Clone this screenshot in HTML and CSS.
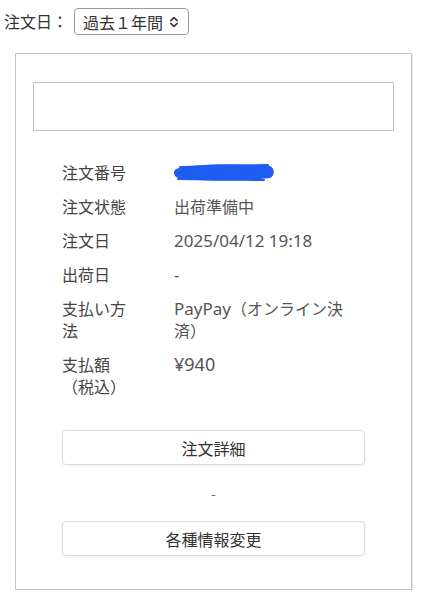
FILE: index.html
```html
<!DOCTYPE html>
<html lang="ja">
<head>
<meta charset="utf-8">
<link rel="stylesheet" href="styles.css">
</head>
<body>
<div class="filter">
  <span class="filter-label">注文日：</span>
  <div class="select">
    <span class="select-text">過去１年間</span>
    <svg class="chev" width="10" height="12" viewBox="0 0 10 12"><path d="M1.8 4.6 L5 1.6 L8.2 4.6 M1.8 7.4 L5 10.4 L8.2 7.4" fill="none" stroke="#333" stroke-width="1.5" stroke-linecap="round" stroke-linejoin="round"/></svg>
  </div>
</div>
<div class="card">
  <div class="search-box"></div>
  <div class="info">
    <div class="row"><div class="label">注文番号</div><div class="value"><svg class="scribble" width="104" height="22" viewBox="0 0 104 22"><path d="M4 8 C20 3 60 2 98 5 C103 7 103 15 98 17 C70 20 30 21 6 17 C1 15 1 10 4 8 Z" fill="#1d5df2"/><path d="M8 6 L96 4 M6 18 L92 19" stroke="#1d5df2" stroke-width="2" fill="none" stroke-linecap="round"/></svg></div></div>
    <div class="row"><div class="label">注文状態</div><div class="value">出荷準備中</div></div>
    <div class="row"><div class="label">注文日</div><div class="value"><span class="latin">2025/04/12 19:18</span></div></div>
    <div class="row"><div class="label">出荷日</div><div class="value"><span class="latin">-</span></div></div>
    <div class="row"><div class="label">支払い方法</div><div class="value"><span class="latin">PayPay</span>（オンライン決済）</div></div>
    <div class="row"><div class="label">支払額（税込）</div><div class="value"><span class="price">¥940</span></div></div>
  </div>
  <div class="actions">
    <div class="btn">注文詳細</div>
    <div class="dash">-</div>
    <div class="btn">各種情報変更</div>
  </div>
</div>
</body>
</html>
```
FILE: styles.css
```css
html, body {
  margin: 0;
  padding: 0;
  background: #fff;
}
body {
  font-family: "Noto Sans CJK JP", "Noto Sans", sans-serif;
  color: #444;
  font-size: 16px;
}
.filter {
  display: flex;
  align-items: center;
  padding: 8px 0 0 4px;
  gap: 6px;
  height: 27px;
}
.filter-label {
  color: #333;
  font-size: 16px;
  line-height: 27px;
  white-space: nowrap;
}
.select {
  box-sizing: border-box;
  height: 27px;
  width: 115px;
  flex-shrink: 0;
  border: 1px solid #9a9a9a;
  border-radius: 4px;
  display: flex;
  align-items: center;
  padding: 0 0 0 8px;
  gap: 6px;
  color: #333;
  line-height: 1;
  white-space: nowrap;
}
.chev { display: block; flex-shrink: 0; margin-top: 1px; }
.card {
  box-sizing: border-box;
  margin: 18px 0 0 15px;
  width: 397px;
  height: 537px;
  border: 1px solid #c4c4c4;
  box-shadow: 1px 1px 0 #e4e4e4;
  padding: 28px 17px 0 17px;
}
.search-box {
  height: 49px;
  box-sizing: border-box;
  border: 1px solid #c4c4c4;
}
.info {
  margin: 24px 0 0 29px;
  width: 300px;
}
.row {
  display: grid;
  grid-template-columns: 72px 184px;
  column-gap: 40px;
  padding: 6px 0;
  line-height: 22px;
}
.label, .value {
  word-break: break-all;
  line-break: strict;
}
.label { color: #444; }
.value { color: #555; }
.latin {
  font-family: "Noto Sans", "Noto Sans CJK JP", sans-serif;
  font-size: 17px;
  line-height: 1;
}
.price {
  font-family: "Noto Sans", "Noto Sans CJK JP", sans-serif;
  font-size: 18px;
  line-height: 1;
}
.scribble { display: block; margin: 0 0 0 -2px; }
.actions {
  margin: 27px 0 0 29px;
  width: 303px;
  display: flex;
  flex-direction: column;
}
.btn {
  box-sizing: border-box;
  height: 35px;
  border: 1px solid #dcdcdc;
  border-radius: 4px;
  box-shadow: 0 1px 3px rgba(0,0,0,0.08);
  display: flex;
  align-items: center;
  justify-content: center;
  color: #333;
}
.dash {
  height: 56px;
  line-height: 56px;
  text-align: center;
  color: #666;
  font-size: 14px;
}
```
